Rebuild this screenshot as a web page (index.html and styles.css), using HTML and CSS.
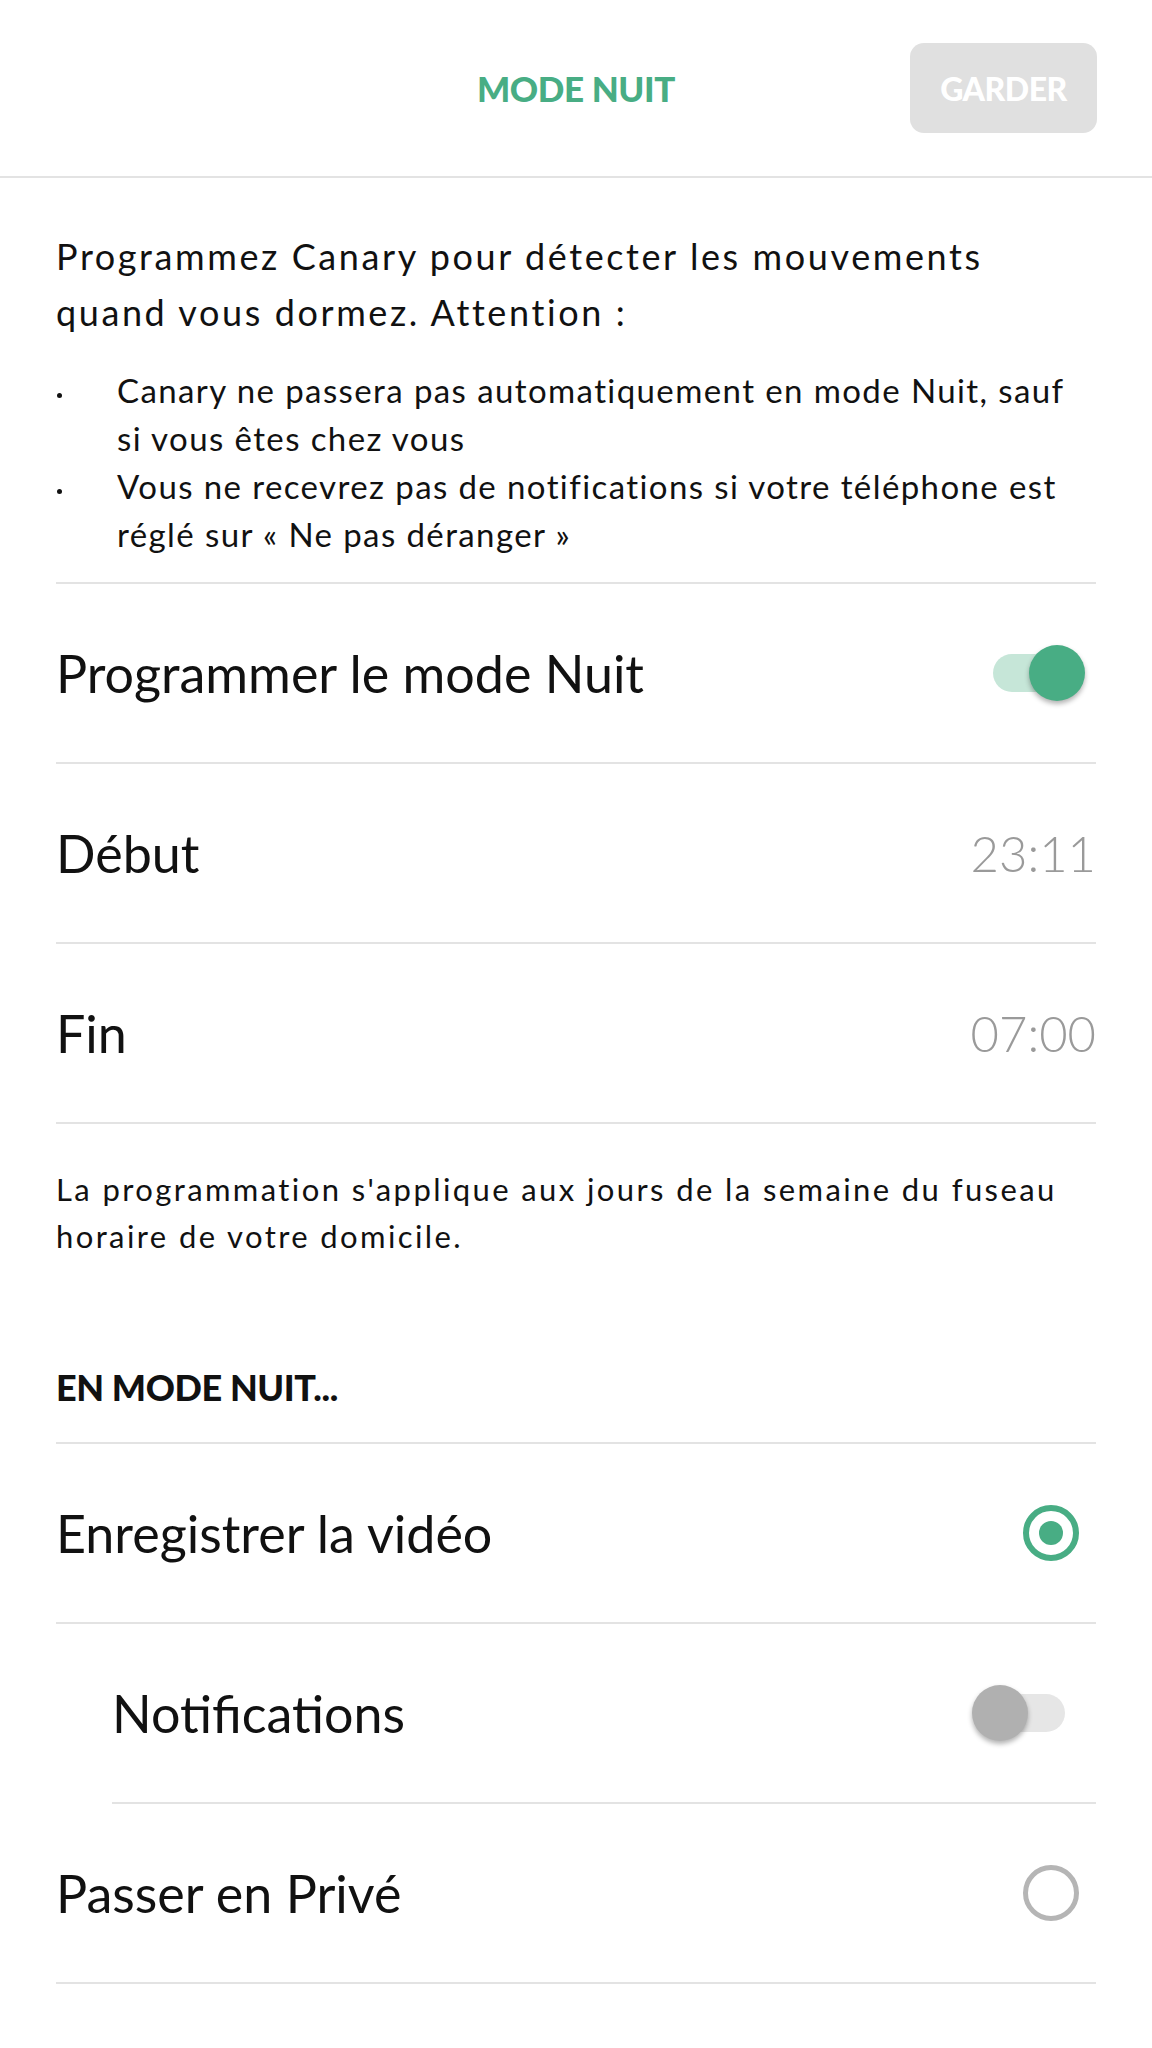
FILE: index.html
```html
<!DOCTYPE html>
<html lang="fr">
  <head>
    <meta charset="UTF-8" />
    <meta name="viewport" content="width=device-width, initial-scale=1.0" />
    <title>Mode Nuit</title>
    <link rel="stylesheet" href="styles.css">
  </head>
  <body>
    <!-- Barre du haut -->
    <header class="topbar">
      <div></div>
      <h1 class="topbar-title">MODE NUIT</h1>
      <div class="topbar-actions">
        <button class="btn-save" disabled>GARDER</button>
      </div>
    </header>

    <main class="content">
      <div class="intro">
        <p>Programmez Canary pour détecter les mouvements quand vous dormez. Attention :</p>
        <ul class="warnings">
          <li>Canary ne passera pas automatiquement en mode Nuit, sauf si vous êtes chez vous</li>
          <li>Vous ne recevrez pas de notifications si votre téléphone est réglé sur « Ne pas déranger »</li>
        </ul>
      </div>

      <div class="row">
        <span class="row-label">Programmer le mode Nuit</span>
        <span class="switch switch-on"><span class="switch-knob"></span></span>
      </div>

      <div class="row">
        <span class="row-label">Début</span>
        <span class="row-value">23:11</span>
      </div>

      <div class="row">
        <span class="row-label">Fin</span>
        <span class="row-value">07:00</span>
      </div>

      <p class="note">La programmation s'applique aux jours de la semaine du fuseau horaire de votre domicile.</p>

      <h2 class="section-title">EN MODE NUIT...</h2>

      <div class="row">
        <span class="row-label">Enregistrer la vidéo</span>
        <span class="radio radio-checked"></span>
      </div>

      <div class="row row-sub">
        <span class="row-label">Notifications</span>
        <span class="switch switch-off"><span class="switch-knob"></span></span>
      </div>

      <div class="row">
        <span class="row-label">Passer en Privé</span>
        <span class="radio"></span>
      </div>
    </main>
  </body>
</html>
```

FILE: styles.css
```css
body {
  margin: 0;
  font-family: Lato, "Open Sans", sans-serif;
  color: #111;
  background-color: #fff;
}
.topbar {
  display: grid;
  grid-template-columns: 1fr auto 1fr;
  align-items: center;
  height: 176px;
  border-bottom: 2px solid #e3e3e3;
}
.topbar-title {
  margin: 0;
  font-size: 35px;
  font-weight: 900;
  color: #48ad84;
  letter-spacing: -0.4px;
}
.topbar-actions {
  display: flex;
  justify-content: flex-end;
  padding-right: 55px;
}
.btn-save {
  width: 187px;
  height: 90px;
  border: none;
  border-radius: 14px;
  background-color: #e0e0e0;
  color: #fff;
  font-family: Lato, sans-serif;
  font-size: 32px;
  font-weight: 900;
  letter-spacing: -0.5px;
}
.content {
  padding: 0 56px;
}
.intro {
  padding-top: 50px;
  padding-bottom: 24px;
  border-bottom: 2px solid #e3e3e3;
}
.intro p {
  margin: 0;
  font-size: 36px;
  line-height: 56px;
  letter-spacing: 2.6px;
}
.warnings {
  margin: 26px 0 0;
  padding: 0;
  list-style: none;
}
.warnings li {
  position: relative;
  padding-left: 61px;
  font-size: 33px;
  line-height: 48px;
  letter-spacing: 1.4px;
}
.warnings li::before {
  content: "";
  position: absolute;
  left: 1px;
  top: 27px;
  width: 5px;
  height: 5px;
  border-radius: 50%;
  background-color: #111;
}
.row {
  display: flex;
  align-items: center;
  justify-content: space-between;
  height: 178px;
  border-bottom: 2px solid #e3e3e3;
}
.row-label {
  font-size: 52px;
  font-weight: 400;
}
.row-value {
  font-size: 49px;
  font-weight: 300;
  color: #9a9a9a;
}
.row-sub {
  margin-left: 56px;
}
.note {
  margin: 42px 0 0;
  font-size: 31px;
  line-height: 47px;
  letter-spacing: 2.4px;
}
.section-title {
  margin: 107px 0 0;
  padding-bottom: 35px;
  font-size: 36px;
  line-height: 40px;
  font-weight: 900;
  letter-spacing: -0.4px;
  border-bottom: 2px solid #e3e3e3;
}
.switch {
  position: relative;
  width: 82px;
  height: 38px;
  border-radius: 19px;
}
.switch-knob {
  position: absolute;
  top: -9px;
  width: 56px;
  height: 56px;
  border-radius: 50%;
  box-shadow: 0 3px 5px rgba(0, 0, 0, 0.3);
}
.switch-on {
  margin-right: 21px;
  background-color: #c6e6d8;
}
.switch-on .switch-knob {
  right: -10px;
  background-color: #48ad84;
}
.switch-off {
  margin-right: 31px;
  background-color: #e6e6e6;
}
.switch-off .switch-knob {
  left: -11px;
  background-color: #b0b0b0;
}
.radio {
  box-sizing: border-box;
  width: 56px;
  height: 56px;
  margin-right: 17px;
  border-radius: 50%;
  border: 5px solid #b5b5b5;
}
.radio-checked {
  border: 6px solid #48ad84;
  display: flex;
  align-items: center;
  justify-content: center;
}
.radio-checked::after {
  content: "";
  width: 24px;
  height: 24px;
  border-radius: 50%;
  background-color: #48ad84;
}
```
